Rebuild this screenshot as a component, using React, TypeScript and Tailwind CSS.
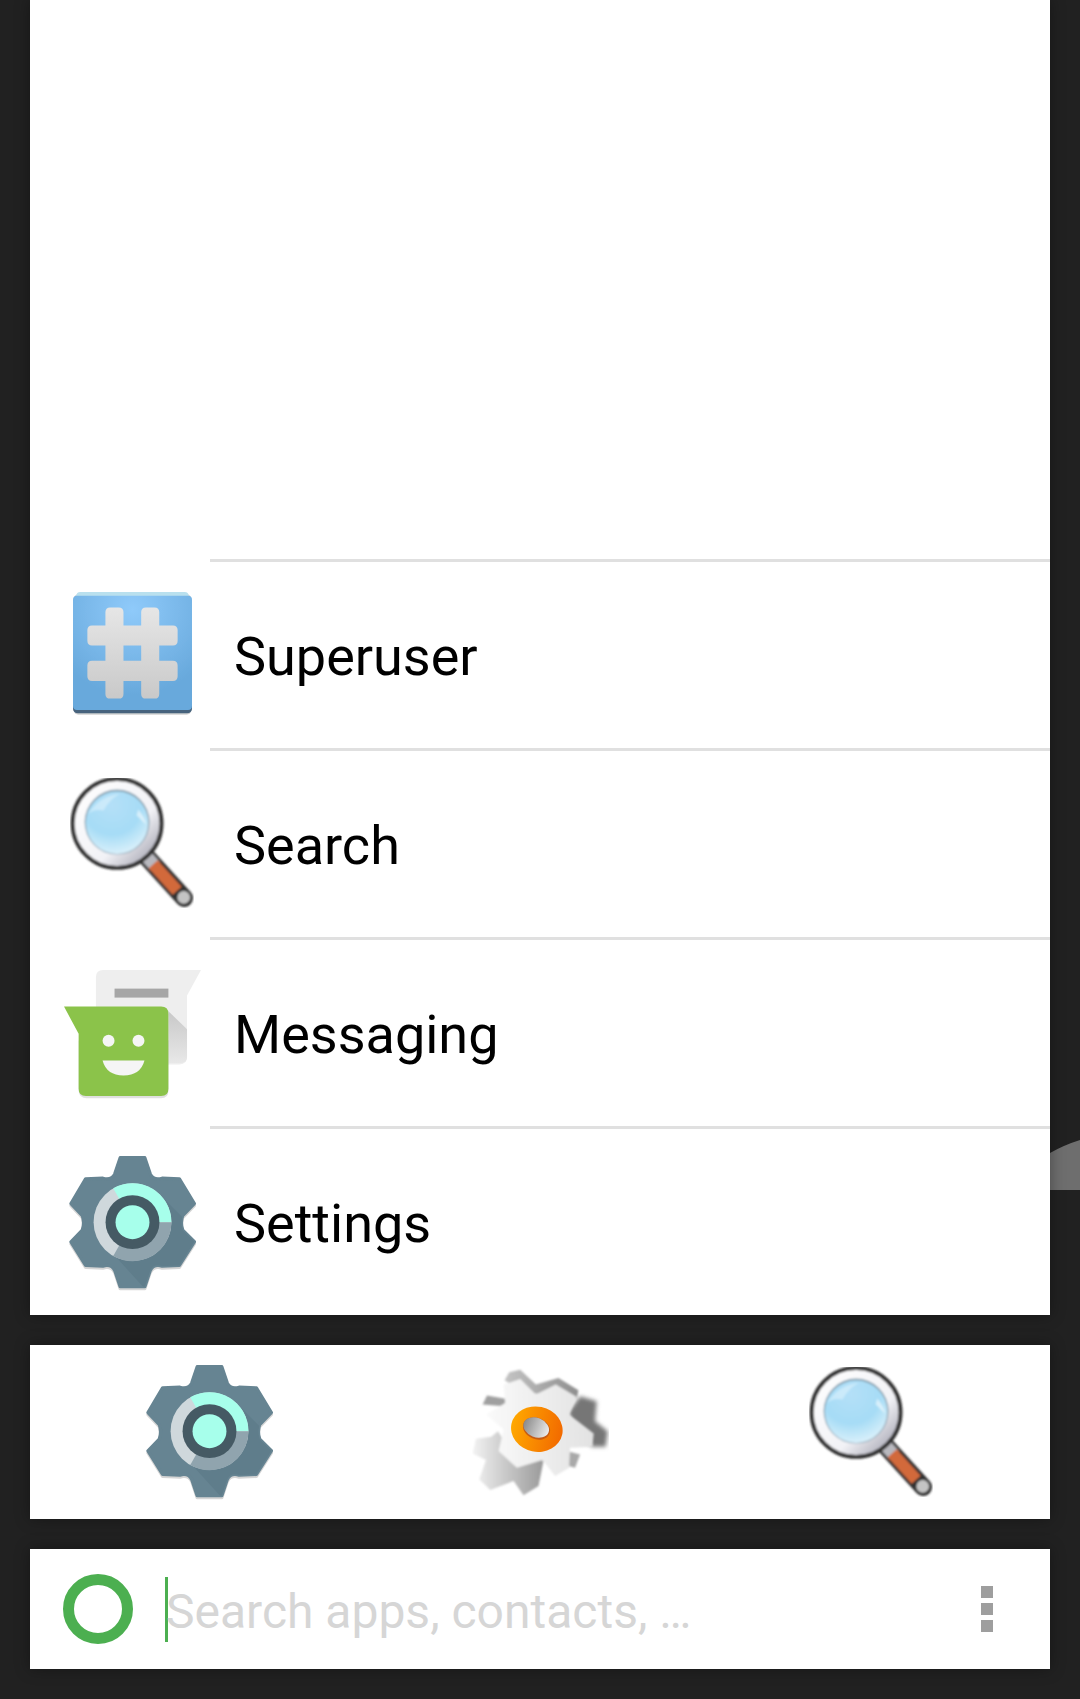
import React from "react";

function SuperuserIcon() {
  return (
    <svg viewBox="127 97 356 368" className="w-[119px] h-[123px]">
      <defs>
        <radialGradient id="su-bg" cx="50%" cy="12%" r="75%">
          <stop offset="0" stopColor="#8fcafa" />
          <stop offset="1" stopColor="#68a9dc" />
        </radialGradient>
        <linearGradient id="su-hash" x1="0" y1="0" x2="0" y2="1">
          <stop offset="0" stopColor="#e6e6e6" />
          <stop offset="1" stopColor="#c9c9c9" />
        </linearGradient>
        <filter id="su-soft" x="-5%" y="-5%" width="110%" height="110%">
          <feGaussianBlur stdDeviation="1.5" />
        </filter>
      </defs>
      <g filter="url(#su-soft)">
        <rect x="129" y="104" width="352" height="360" rx="14" fill="#000" opacity="0.18" />
        <rect x="127" y="300" width="356" height="160" rx="14" fill="#46637d" />
        <rect x="137" y="97" width="336" height="40" rx="12" fill="#b9e0ee" />
        <rect x="127" y="108" width="356" height="342" rx="12" fill="url(#su-bg)" />
        <path
          fill="url(#su-hash)"
          d="M238 143h26q14 0 14 14v40h53v-40q0-14 14-14h26q14 0 14 14v40h41q14 0 14 14v32q0 14-14 14h-41v46h41q14 0 14 14v32q0 14-14 14h-41v39q0 14-14 14h-26q-14 0-14-14v-39h-53v39q0 14-14 14h-26q-14 0-14-14v-39h-40q-14 0-14-14v-32q0-14 14-14h40v-46h-40q-14 0-14-14v-32q0-14 14-14h40v-40q0-14 14-14zM278 257v46h53v-46z"
          fillRule="evenodd"
        />
      </g>
    </svg>
  );
}

function MagnifierIcon({ id, className }: { id: string; className: string }) {
  return (
    <svg viewBox="0 0 372 392" className={className}>
      <defs>
        <radialGradient id={`${id}-lens`} cx="42%" cy="22%" r="85%">
          <stop offset="0" stopColor="#b4e0f8" />
          <stop offset="0.55" stopColor="#a6dcf6" />
          <stop offset="1" stopColor="#e4f4fb" />
        </radialGradient>
        <linearGradient id={`${id}-ring`} x1="0" y1="0" x2="1" y2="1">
          <stop offset="0" stopColor="#ffffff" />
          <stop offset="0.62" stopColor="#f2f2f6" />
          <stop offset="1" stopColor="#8f8f9e" />
        </linearGradient>
        <linearGradient id={`${id}-handle`} x1="0" y1="0" x2="1" y2="0.2">
          <stop offset="0" stopColor="#ea9062" />
          <stop offset="1" stopColor="#b9572a" />
        </linearGradient>
        <filter id={`${id}-soft`} x="-5%" y="-5%" width="110%" height="110%">
          <feGaussianBlur stdDeviation="2.5" />
        </filter>
      </defs>
      <g filter={`url(#${id}-soft)`}>
        <line x1="225" y1="232" x2="343" y2="362" stroke="#333333" strokeWidth="54" strokeLinecap="round" />
        <line x1="222" y1="228" x2="256" y2="266" stroke="#b8b8be" strokeWidth="38" />
        <line x1="250" y1="260" x2="322" y2="340" stroke="#d2693a" strokeWidth="36" />
        <circle cx="342" cy="360" r="19" fill="#c4c4c4" />
        <circle cx="141" cy="137" r="134" fill={`url(#${id}-ring)`} stroke="#303030" strokeWidth="12" />
        <circle cx="141" cy="133" r="98" fill="#8aa4b4" />
        <circle cx="141" cy="135" r="94" fill={`url(#${id}-lens)`} />
        <path d="M52 110Q90 52 150 48Q118 62 100 98Q72 92 52 110Z" fill="#fff" opacity="0.35" />
        <path d="M205 95Q226 120 228 140Q212 124 200 112Z" fill="#fff" opacity="0.55" />
      </g>
    </svg>
  );
}

function MessagingIcon() {
  return (
    <svg viewBox="100 88 412 388" className="w-[137px] h-[129px]">
      <defs>
        <linearGradient id="msg-shadow" x1="0" y1="0" x2="0" y2="1">
          <stop offset="0" stopColor="#c8c8c8" />
          <stop offset="1" stopColor="#e8e8e8" />
        </linearGradient>
      </defs>
      <path d="M218 88H512L470 165V350Q470 372 448 372H218Q196 372 196 350V110Q196 88 218 88Z" fill="#eeeeee" />
      <rect x="252" y="144" width="162" height="27" fill="#a6a6a6" />
      <path d="M414 212L470 266V350Q470 366 454 368L414 368Z" fill="url(#msg-shadow)" />
      <path d="M144 300V452Q146 474 168 474H392Q414 474 414 452V300Z" fill="#000" opacity="0.12" />
      <path d="M100 198H392Q414 198 414 220V445Q414 467 392 467H166Q144 467 144 445V280Z" fill="#8bc34a" />
      <circle cx="234" cy="301" r="18" fill="#f5f5f5" />
      <circle cx="324" cy="301" r="18" fill="#f5f5f5" />
      <path d="M216 360H342Q330 405 279 405Q228 405 216 360Z" fill="#f5f5f5" />
    </svg>
  );
}

function AndroidGear({ id, className }: { id: string; className: string }) {
  const gear =
    "M268 652H342L358 700Q368 722 394 714L446 716L491 790L456 826Q448 848 456 870L491 905L446 976L394 978Q368 970 358 992L342 1040H268L252 992Q242 970 216 978L164 976L120 905L154 870Q162 848 154 826L120 790L164 716L216 714Q242 722 252 700Z";
  return (
    <svg viewBox="112 644 386 412" className={className}>
      <defs>
        <clipPath id={`${id}-clip`}>
          <path d={gear} />
        </clipPath>
      </defs>
      <path d={gear} transform="translate(0 6)" fill="#000" opacity="0.16" stroke="#000" strokeWidth="10" strokeLinejoin="round" />
      <path d={gear} fill="#668492" stroke="#668492" strokeWidth="10" strokeLinejoin="round" />
      <path d="M388 764L500 876V960L400 1060H355L250 945Z" fill="#5f7d8b" clipPath={`url(#${id}-clip)`} />
      <circle cx="305" cy="846" r="117" fill="#cfd8dc" />
      <path d="M305 846H422A117 117 0 0 0 247 744Z" fill="#a7ffeb" />
      <path d="M305 846H422A117 117 0 0 1 247 948Z" fill="#90a4ae" />
      <circle cx="305" cy="846" r="81" fill="#455a64" />
      <circle cx="305" cy="846" r="51" fill="#a7ffeb" />
    </svg>
  );
}

function CogIcon() {
  return (
    <svg viewBox="70 85 412 388" className="w-[137px] h-[129px]">
      <defs>
        <linearGradient id="cog-main" x1="0" y1="0" x2="1" y2="0">
          <stop offset="0" stopColor="#fafafa" />
          <stop offset="1" stopColor="#e2e2e2" />
        </linearGradient>
        <linearGradient id="cog-low" x1="0" y1="0" x2="1" y2="0">
          <stop offset="0" stopColor="#f2f2f2" />
          <stop offset="1" stopColor="#9a9a9a" />
        </linearGradient>
        <linearGradient id="cog-top" x1="0" y1="0" x2="1" y2="0">
          <stop offset="0" stopColor="#c4c4c4" />
          <stop offset="1" stopColor="#8e8e8e" />
        </linearGradient>
        <linearGradient id="cog-ring" x1="0" y1="0" x2="1" y2="0">
          <stop offset="0" stopColor="#ffa800" />
          <stop offset="1" stopColor="#f26a00" />
        </linearGradient>
        <linearGradient id="cog-hole" x1="0" y1="0" x2="1" y2="0">
          <stop offset="0" stopColor="#8a8a8a" />
          <stop offset="1" stopColor="#ececec" />
        </linearGradient>
        <filter id="cog-blur" x="-20%" y="-20%" width="140%" height="140%">
          <feGaussianBlur stdDeviation="7" />
        </filter>
        <filter id="cog-soft" x="-10%" y="-10%" width="120%" height="120%">
          <feGaussianBlur stdDeviation="2.5" />
        </filter>
      </defs>
      <g filter="url(#cog-blur)">
        <path d="M362 215L395 170L445 185L440 245L478 275L472 322L430 322L400 280L365 270Z" fill="#767676" />
      </g>
      <g filter="url(#cog-soft)">
        <path d="M168 122L182 98L215 90L262 135L330 115L390 152L385 180L300 165L230 160Z" fill="url(#cog-top)" />
        <path d="M102 195L115 168L175 178L165 200Z" fill="#a0a0a0" />
        <path d="M72 342L82 298L128 292L148 275L170 310L285 365L270 440L225 468L195 425L125 452L92 420L112 362Z" fill="url(#cog-low)" />
        <path d="M355 335L395 345L380 385L360 380Z" fill="#a9a9a9" />
        <path d="M165 135L215 118L262 165L322 135L385 172L362 225L436 282L432 322L365 325L362 385L320 410L282 362L205 385L150 335L165 270L112 225L170 190Z" fill="url(#cog-main)" />
      </g>
      <ellipse cx="265" cy="269" rx="78" ry="68" transform="rotate(12 265 269)" fill="url(#cog-ring)" />
      <ellipse cx="264" cy="267" rx="42" ry="32" transform="rotate(22 264 267)" fill="#c65c14" />
      <ellipse cx="263" cy="264" rx="40" ry="29" transform="rotate(22 263 264)" fill="url(#cog-hole)" />
    </svg>
  );
}

function Row({ icon, label }: { icon: React.ReactNode; label: string }) {
  return (
    <div className="flex h-[189px] items-stretch">
      <div className="flex w-[180px] shrink-0 items-center justify-center pl-[24px]">{icon}</div>
      <div className="flex flex-1 items-center border-t-[3px] border-[#e0e0e0] pl-[24px] pt-[3px] text-[54px] text-black">
        {label}
      </div>
    </div>
  );
}

export default function App() {
  return (
    <div
      className="relative flex h-[1699px] w-[1080px] flex-col overflow-hidden bg-[#212121] px-[30px]"
      style={{ fontFamily: "Roboto, sans-serif" }}
    >
      <svg viewBox="0 0 30 50" className="absolute right-0 top-[1140px] h-[50px] w-[30px]">
        <path d="M0 13Q14 5 30 0V50H0Z" fill="#6e6e6e" />
      </svg>
      <div className="relative flex h-[1315px] flex-col justify-end bg-white shadow-[0_0_14px_rgba(0,0,0,0.35)]">
        <Row icon={<SuperuserIcon />} label="Superuser" />
        <Row icon={<MagnifierIcon id="mag-a" className="h-[130px] w-[124px]" />} label="Search" />
        <Row icon={<div className="mt-[6px]"><MessagingIcon /></div>} label="Messaging" />
        <Row icon={<div className="mt-[6px]"><AndroidGear id="gear-a" className="h-[137px] w-[129px]" /></div>} label="Settings" />
      </div>
      <div className="relative mt-[30px] flex h-[174px] items-center bg-white px-[14px] shadow-[0_0_14px_rgba(0,0,0,0.35)]">
        <div className="flex flex-1 justify-center"><AndroidGear id="gear-b" className="h-[137px] w-[129px]" /></div>
        <div className="flex flex-1 justify-center"><CogIcon /></div>
        <div className="flex flex-1 justify-center"><MagnifierIcon id="mag-b" className="h-[130px] w-[124px]" /></div>
      </div>
      <div className="relative mt-[30px] flex h-[120px] items-center bg-white shadow-[0_0_14px_rgba(0,0,0,0.35)]">
        <div className="ml-[33px] h-[70px] w-[70px] shrink-0 rounded-full border-[11px] border-[#4caf50]" />
        <div className="ml-[32px] h-[65px] w-[3px] shrink-0 bg-[#4caf50]" />
        <div className="-ml-[2px] flex-1 pt-[6px] text-[48px] leading-none text-[#d6d6d6]">Search apps, contacts, …</div>
        <div className="mr-[57px] flex flex-col gap-[5px]">
          <div className="h-[12px] w-[12px] bg-[#9e9e9e]" />
          <div className="h-[12px] w-[12px] bg-[#9e9e9e]" />
          <div className="h-[12px] w-[12px] bg-[#9e9e9e]" />
        </div>
      </div>
    </div>
  );
}
